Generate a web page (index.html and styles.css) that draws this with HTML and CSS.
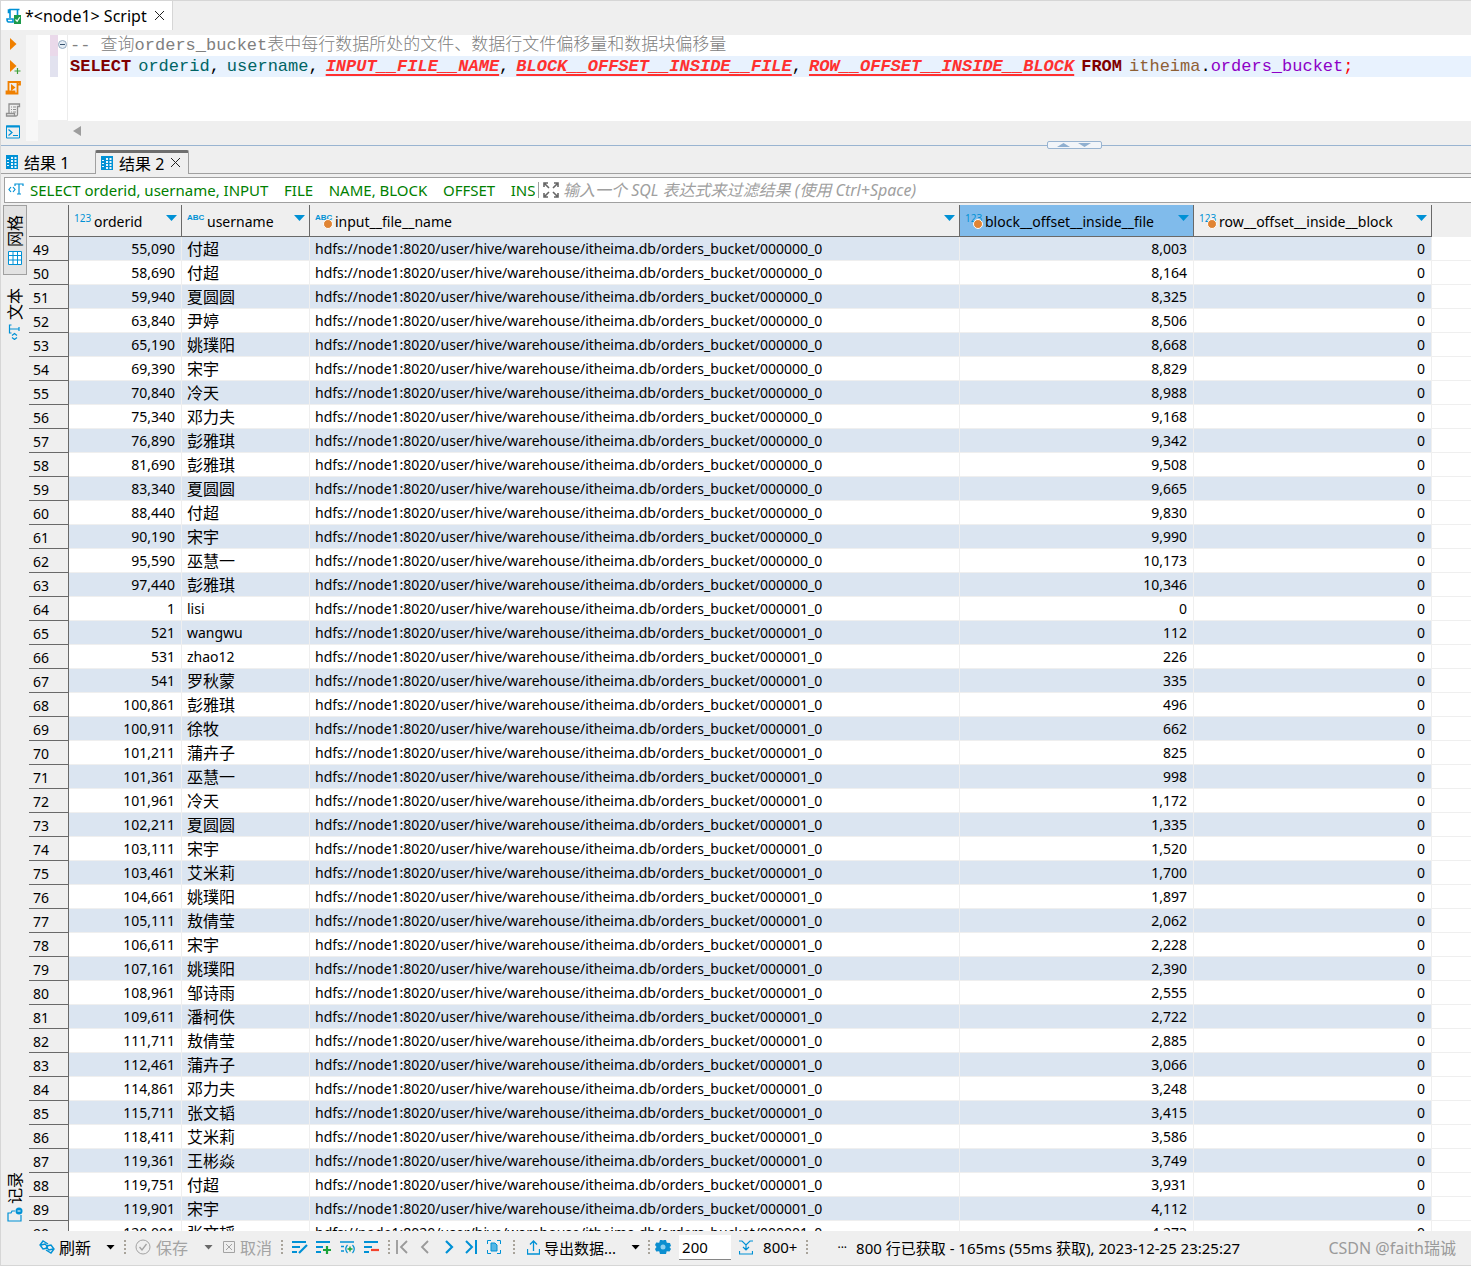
FILE: index.html
```html
<!DOCTYPE html>
<html lang="zh-CN">
<head>
  <meta charset="UTF-8" />
  <meta name="viewport" content="width=device-width, initial-scale=1" />
  <title>*&lt;node1&gt; Script</title>
  <link rel="stylesheet" href="styles.css">
</head>
<body>

<header class="tab-bar">
  <div class="file-tab">
    <svg width="16" height="16" viewBox="0 0 16 16" fill="none">
      <path d="M4 10V1.5H13.5M11.500 1.500V7M4 2H2.500V4.500H4M1 11H7V14H2.500Q1 14 1 11Z" stroke="#0091d5" stroke-width="1.600"/>
      <rect x="8" y="7" width="7" height="9" fill="#1c9a4b"/>
      <path d="M9.500 11.500l1.700 1.800 2.500-4" stroke="#fff" stroke-width="1.200"/>
    </svg>
    <span>*&lt;node1&gt; Script</span>
    <button type="button" class="close" aria-label="关闭">
      <svg width="11" height="11" viewBox="0 0 11 11"><path d="M1 1l9 9M10 1l-9 9" stroke="#222"/></svg>
    </button>
  </div>
</header>

<section class="editor">
  <nav class="editor-tools">
    <button type="button" aria-label="执行"><svg width="16" height="16" viewBox="0 0 16 16"><path d="M5 2l6.500 6L5 14z" fill="#f08000"/></svg></button>
    <button type="button" aria-label="在新标签执行"><svg width="16" height="16" viewBox="0 0 16 16"><path d="M5 2l6.500 6L5 14z" fill="#f08000"/><path d="M12.500 10v6M9.500 13h6" stroke="#3fa037" stroke-width="1.200"/></svg></button>
    <button type="button" aria-label="执行脚本"><svg width="16" height="16" viewBox="0 0 16 16" fill="none"><path d="M3.500 11V2H15V4.500H12.500V13.500H1.500V11.500H9.500V13.500M12.500 2V8" stroke="#f08000" stroke-width="1.800"/><path d="M6 4l4.500 3.500L6 11z" fill="#f08000"/></svg></button>
    <button type="button" aria-label="执行计划"><svg width="16" height="16" viewBox="0 0 16 16" fill="none"><path d="M4 11V2H14.500V4.500H12.500V12.500Q12.500 14 11 14H1.500V11.500H9.500V14" stroke="#8f8f8f" stroke-width="1.300"/><path d="M6 5h1M8 5h3M6 7.500h1M8 7.500h3M6 10h1M8 10h3" stroke="#8f8f8f"/></svg></button>
    <button type="button" aria-label="控制台"><svg width="16" height="16" viewBox="0 0 16 16" fill="none"><path d="M1.500 2h13v12h-13z" stroke="#0091d5"/><path d="M1 2.500h14" stroke="#0091d5" stroke-width="2"/><path d="M3.500 5.500L7 8.500l-3.500 3M8 11.500h5" stroke="#0091d5" stroke-width="1.200"/></svg></button>
  </nav>
  <div class="ruler"></div>
  <div class="fold">
    <div class="change added"></div>
    <div class="change edited"></div>
    <svg class="fold-mark" width="9" height="9" viewBox="0 0 9 9"><circle cx="4.500" cy="4.500" r="4" fill="#e4ecf4" stroke="#93a9bf"/><path d="M2 4.500h5" stroke="#37536f"/></svg>
  </div>
  <div class="code-pane">
    <div class="code">
      <div class="line comment"><span>--&nbsp;</span><span>查询orders_bucket表中每行数据所处的文件、数据行文件偏移量和数据块偏移量</span></div>
      <div class="line current"><b class="kw">SELECT</b><span><span class="col">orderid</span>,</span><span><span class="col">username</span>,</span><span><span class="err">INPUT__FILE__NAME</span>,</span><span><span class="err">BLOCK__OFFSET__INSIDE__FILE</span>,</span><span class="err">ROW__OFFSET__INSIDE__BLOCK</span><b class="kw">FROM</b><span><span class="schema">itheima</span>.<span class="tbl">orders_bucket</span><span class="semi">;</span></span></div>
    </div>
    <div class="hscroll"><svg width="8" height="10" viewBox="0 0 8 10"><path d="M8 0v10L0 5z" fill="#9d9d9d"/></svg></div>
  </div>
</section>

<div class="sash">
  <div class="sash-grip">
    <svg width="53" height="6" viewBox="0 0 53 6"><path d="M9 5l6.500-4L22 5zM30 1h13l-6.500 4z" fill="#8fafd0"/></svg>
  </div>
</div>

<nav class="result-tabs">
  <button type="button" class="result-tab">
    <svg width="12" height="14" viewBox="0 0 12 14"><path d="M0 0h12v14H0z" fill="#0091d5"/><path d="M5 2h2v2H5zM8.500 2h2v2h-2zM5 5h2v2H5zM8.500 5h2v2h-2zM5 8h2v2H5zM8.500 8h2v2h-2zM5 11h2v2H5zM8.500 11h2v2h-2zM1 4h2v1H1zM1 7h2v1H1zM1 10h2v1H1z" fill="#eaf6fc"/></svg>
    <span>结果 1</span>
  </button>
  <button type="button" class="result-tab active">
    <svg width="12" height="14" viewBox="0 0 12 14"><path d="M0 0h12v14H0z" fill="#0091d5"/><path d="M5 2h2v2H5zM8.500 2h2v2h-2zM5 5h2v2H5zM8.500 5h2v2h-2zM5 8h2v2H5zM8.500 8h2v2h-2zM5 11h2v2H5zM8.500 11h2v2h-2zM1 4h2v1H1zM1 7h2v1H1zM1 10h2v1H1z" fill="#eaf6fc"/></svg>
    <span>结果 2</span>
    <svg width="11" height="11" viewBox="0 0 11 11"><path d="M1 1l9 9M10 1l-9 9" stroke="#222"/></svg>
  </button>
</nav>

<div class="filter">
  <svg width="16" height="16" viewBox="0 0 16 16" fill="none"><path d="M3 5L1 7.500 3 10M5 5l2 2.500L5 10M7 4V2h8v2M11 2v10M9 12h4" stroke="#0091d5" stroke-width="1.200"/></svg>
  <label class="query" for="filter-input">SELECT orderid, username, INPUT &nbsp;&nbsp; FILE &nbsp;&nbsp; NAME, BLOCK &nbsp;&nbsp; OFFSET &nbsp;&nbsp; INSIDE &nbsp;&nbsp; FILE</label>
  <button type="button" class="expand" aria-label="展开">
    <svg width="16" height="16" viewBox="0 0 16 16" fill="none"><path d="M1 5V1h4M11 1h4v4M15 11v4h-4M5 15H1v-4M1 1l5 5M15 1l-5 5M15 15l-5-5M1 15l5-5" stroke="#666" stroke-width="1.600"/></svg>
  </button>
  <input type="text" id="filter-input" placeholder="输入一个 SQL 表达式来过滤结果 (使用 Ctrl+Space)" />
</div>

<main class="results">
  <nav class="side-tabs">
    <button type="button" class="side-tab active"><span>网格</span>
      <svg width="14" height="14" viewBox="0 0 14 14"><path d="M.5.5h13v13H.5zM.5 4.500h13M.5 9h13M5 .5v13M9.500.5v13" fill="#fff" stroke="#0091d5"/></svg>
    </button>
    <button type="button" class="side-tab"><span>文本</span>
      <svg width="14" height="16" viewBox="0 0 14 16" fill="none"><path d="M3.500 1H1.500v8h2M1.500 5h10M11 3v4M4 11.500L6.500 9.500 9 11.500M4 13.500l2.500 2 2.500-2" stroke="#0091d5" stroke-width="1.200"/></svg>
    </button>
    <button type="button" class="side-tab log"><span>记录</span>
      <svg width="16" height="15" viewBox="0 0 16 15" fill="none"><path d="M8 4H5L4 6H1v8h13V8" stroke="#0091d5" stroke-width="1.200"/><circle cx="12" cy="4" r="3.500" fill="#0091d5"/><path d="M10.500 4h3" stroke="#fff"/></svg>
    </button>
  </nav>
  <div class="grid">
    <table>
      <colgroup><col class="w-num"><col class="w-id"><col class="w-user"><col class="w-file"><col class="w-block"><col class="w-row"><col></colgroup>
      <thead>
        <tr>
          <th></th>
          <th><div class="head"><i class="type">123</i><span>orderid</span><i class="arrow"></i></div></th>
          <th><div class="head"><i class="type abc">ABC</i><span>username</span><i class="arrow"></i></div></th>
          <th><div class="head"><i class="type abc dot">ABC</i><span>input__file__name</span><i class="arrow"></i></div></th>
          <th class="selected"><div class="head"><i class="type dot">123</i><span>block__offset__inside__file</span><i class="arrow"></i></div></th>
          <th><div class="head"><i class="type dot">123</i><span>row__offset__inside__block</span><i class="arrow"></i></div></th>
          <th class="rest"></th>
        </tr>
      </thead>
      <tbody id="rows"></tbody>
    </table>
  </div>
</main>

<footer class="status">
  <button type="button" class="refresh">
    <svg width="16" height="16" viewBox="0 0 16 16" fill="none"><path d="M9 5L4 2 1 6l3 4 5-1M2 6l4-1 3 3M7 11l5 3 3-4-3-4-5 1M14 10l-4 1-3-3" stroke="#0091d5" stroke-width="1.400"/></svg>
    <span>刷新</span><i class="drop"></i>
  </button>
  <i class="sep"></i>
  <button type="button" class="save" disabled>
    <svg width="16" height="16" viewBox="0 0 16 16" fill="none"><circle cx="8" cy="8" r="7" stroke="#a3a3a3"/><path d="M4.500 8l2.500 3 4.500-6" stroke="#a3a3a3" stroke-width="1.300"/></svg>
    <span>保存</span><i class="drop"></i>
  </button>
  <button type="button" class="cancel" disabled>
    <svg width="12" height="12" viewBox="0 0 12 12" fill="none"><path d="M.5.5h11v11H.5zM3 3l6 6M9 3L3 9" stroke="#a3a3a3"/></svg>
    <span>取消</span>
  </button>
  <i class="sep"></i>
  <div class="icons">
    <button type="button" aria-label="编辑"><svg width="16" height="14" viewBox="0 0 16 14" fill="none"><path d="M0 2h14M0 7h8M0 12h5" stroke="#0091d5" stroke-width="1.800"/><path d="M7 13l8-8" stroke="#0091d5" stroke-width="2.200"/></svg></button>
    <button type="button" aria-label="添加"><svg width="16" height="14" viewBox="0 0 16 14" fill="none"><path d="M0 2h14M0 7h7M0 12h5" stroke="#0091d5" stroke-width="1.800"/><path d="M11 6v8M7 10h8" stroke="#1aa33a" stroke-width="2.200"/></svg></button>
    <button type="button" aria-label="复制"><svg width="16" height="14" viewBox="0 0 16 14" fill="none"><path d="M0 2h14M1 6.500h3M1 11h3" stroke="#0091d5" stroke-width="1.600"/><path d="M7.500 5Q4 9 7.500 13M12.500 5q3.500 4 0 8" stroke="#0091d5" stroke-width="1.200"/><path d="M10 6.500v5M7.500 9h5" stroke="#1aa33a" stroke-width="1.400"/></svg></button>
    <button type="button" aria-label="删除"><svg width="16" height="14" viewBox="0 0 16 14" fill="none"><path d="M0 2h14M0 7h8M0 12h5" stroke="#0091d5" stroke-width="1.800"/><path d="M7 10h8" stroke="#f4432c" stroke-width="2.200"/></svg></button>
  </div>
  <i class="sep tight"></i>
  <div class="icons pager">
    <button type="button" aria-label="第一页"><svg width="14" height="14" viewBox="0 0 14 14" fill="none"><path d="M2 0v14M12 1L6 7l6 6" stroke="#999" stroke-width="1.800"/></svg></button>
    <button type="button" aria-label="上一页"><svg width="14" height="14" viewBox="0 0 14 14" fill="none"><path d="M10 1L4 7l6 6" stroke="#999" stroke-width="1.800"/></svg></button>
    <button type="button" aria-label="下一页"><svg width="14" height="14" viewBox="0 0 14 14" fill="none"><path d="M5 1l6 6-6 6" stroke="#0091d5" stroke-width="2.200"/></svg></button>
    <button type="button" aria-label="最后一页"><svg width="14" height="14" viewBox="0 0 14 14" fill="none"><path d="M12 0v14M2 1l6 6-6 6" stroke="#0091d5" stroke-width="2"/></svg></button>
    <button type="button" aria-label="全部"><svg width="14" height="14" viewBox="0 0 14 14" fill="none"><path d="M.5 4V.5H4M10 .5h3.500V4M13.500 10v3.500H10M4 13.500H.5V10" stroke="#0091d5"/><path d="M4 3h4l2 2v6H4z" fill="#55b6e4" stroke="#0091d5"/></svg></button>
  </div>
  <i class="sep wide"></i>
  <button type="button" class="export">
    <svg width="13" height="15" viewBox="0 0 13 15" fill="none"><path d="M.5 9v5h12V9M6.500 11V1.500M3 4.500l3.500-3.500L10 4.500" stroke="#0091d5" stroke-width="1.300"/></svg>
    <span>导出数据...</span><i class="drop"></i>
  </button>
  <i class="sep tight"></i>
  <button type="button" class="gear" aria-label="设置">
    <svg width="16" height="16" viewBox="0 0 16 16"><path d="M5 1h2.500L8 2l.5-1H11l.8 2.800L15 4l1 3-1.500 1L16 10l-1.500 2.500-2.800-.2L11 15H5l-.8-2.700-3 .2L0 10l1.500-2L0 6l1.200-2.500 3 .3z" fill="#0c8fd0"/><circle cx="8" cy="8" r="2.500" fill="#8ed0f0"/></svg>
  </button>
  <input type="text" class="limit" value="200" aria-label="行数" />
  <button type="button" class="count">
    <svg width="14" height="15" viewBox="0 0 14 15" fill="none"><path d="M.5 11v3h13v-3M0 1h3l4 4 4-4h3M7 5v4M4 7l3 3 3-3" stroke="#0091d5" stroke-width="1.200"/></svg>
    <span>800+</span>
  </button>
  <i class="sep"></i>
  <span class="more">···</span>
  <span class="message">800 行已获取 - 165ms (55ms 获取), 2023-12-25 23:25:27</span>
  <span class="watermark">CSDN @faith瑞诚</span>
</footer>

<script src="rows.js"></script>
</body>
</html>
```
FILE: styles.css
```css
* {
  box-sizing: border-box;
}
body {
  margin: 0;
  height: 100vh;
  display: flex;
  flex-direction: column;
  overflow: hidden;
  background-color: #efefef;
  border: 1px solid #d6d6d6;
  border-right: none;
  font-family: "Noto Sans", "Noto Sans CJK SC", sans-serif;
  font-size: 16px;
  color: #000;
}
button {
  display: flex;
  align-items: center;
  margin: 0;
  padding: 0;
  border: none;
  background: none;
  font: inherit;
  color: inherit;
}
svg {
  display: block;
  flex: none;
}
i {
  font-style: normal;
}

/* editor */
.tab-bar {
  height: 29px;
  flex: none;
  display: flex;
}
.file-tab {
  display: flex;
  align-items: center;
  gap: 3px;
  padding: 0 7px 0 5px;
  background-color: #fff;
  border-right: 1px solid #d6d6d6;
  white-space: nowrap;
}
.file-tab .close {
  margin-left: 4px;
}
.editor {
  display: flex;
  flex: none;
  height: 111px;
  padding-top: 5px;
}
.editor-tools {
  width: 25px;
  padding: 1px 4px;
  display: flex;
  flex-direction: column;
  gap: 6px;
}
.ruler {
  width: 12px;
  background-color: #f7f7f7;
}
.fold {
  position: relative;
  width: 30px;
  height: 85px;
  padding-left: 12px;
  background-color: #fff;
  border-right: 1px solid #ececec;
}
.change {
  width: 8px;
  height: 21px;
}
.change.added {
  background-color: #ead9ea;
}
.change.edited {
  background-color: #e2e2ef;
}
.fold-mark {
  position: absolute;
  top: 5px;
  right: 0;
}
.code-pane {
  flex: 1;
  min-width: 0;
}
.code {
  height: 86px;
  padding-left: 2px;
  overflow: hidden;
  background-color: #fff;
  font-family: "Liberation Mono", "Noto Sans CJK SC", monospace;
  font-size: 17px;
  white-space: nowrap;
}
.line {
  display: flex;
  height: 21px;
  line-height: 22px;
}
.line.comment {
  color: #808080;
  font-weight: 300;
}
.line.current {
  gap: 7px;
  background-color: #e8f2fe;
}
.kw {
  color: #800000;
}
.col {
  color: #006464;
}
.err {
  color: #ff3030;
  font-weight: bold;
  font-style: italic;
  text-decoration: underline 2px;
  text-underline-offset: 3px;
  text-decoration-skip-ink: none;
}
.schema {
  color: #8e6035;
}
.tbl {
  color: #8e00c6;
}
.semi {
  color: #ff0000;
}
.hscroll {
  padding: 5px;
}

/* sash */
.sash {
  height: 9px;
  flex: none;
  display: flex;
  justify-content: center;
  background: linear-gradient(#99b4d1, #99b4d1) 0 4px / 100% 1px no-repeat;
}
.sash-grip {
  position: relative;
  left: 23%;
  width: 55px;
  height: 8px;
  border: 1px solid #99b4d1;
  border-radius: 2px;
  background-color: #f2f5f9;
}

/* result tabs */
.result-tabs {
  height: 24px;
  flex: none;
  display: flex;
  border-bottom: 1px solid #a0a0a0;
}
.result-tab {
  gap: 6px;
  padding: 0 6px 0 5px;
  width: 94px;
  white-space: nowrap;
}
.result-tab.active {
  height: 24px;
  padding: 0 5px 2px;
  background-color: #efefef;
  border: 1px solid #a0a0a0;
  border-top: 3px solid #6e6e6e;
  border-bottom: none;
  border-radius: 2px 2px 0 0;
}

/* filter */
.filter {
  height: 26px;
  flex: none;
  display: flex;
  align-items: center;
  margin: 3px 0 2px 3px;
  padding-left: 3px;
  background-color: #fff;
  border: 1px solid #a0a0a0;
  border-right: none;
  font-size: 15px;
}
.query {
  width: 505px;
  margin-left: 6px;
  overflow: hidden;
  white-space: nowrap;
  color: #008000;
}
.expand {
  margin-left: 3px;
  padding-left: 4px;
  border-left: 1px solid #a0a0a0;
}
.filter input {
  flex: 1;
  margin-left: 4px;
  padding: 0;
  border: none;
  outline: none;
  background: none;
  font: inherit;
  font-size: 16px;
  font-style: italic;
}
.filter input::placeholder {
  color: #a0a0a0;
}

/* grid */
.results {
  flex: 1;
  min-height: 0;
  display: flex;
}
.side-tabs {
  width: 28px;
  flex: none;
  display: flex;
  flex-direction: column;
  gap: 4px;
  padding: 0 2px 8px;
}
.side-tab {
  width: 24px;
  height: 70px;
  flex-direction: column;
  justify-content: center;
  gap: 3px;
  border: 1px solid transparent;
}
.side-tab span {
  writing-mode: vertical-rl;
  text-orientation: sideways;
  transform: rotate(180deg);
  line-height: 20px;
}
.side-tab.active {
  border-color: #a0a0a0;
  background-color: #e2e2e2;
}
.side-tab.log {
  margin-top: auto;
  height: 52px;
}
.grid {
  flex: 1;
  min-width: 0;
  overflow: hidden;
  background-color: #fff;
}
table {
  width: 100%;
  table-layout: fixed;
  border-collapse: separate;
  border-spacing: 0;
  font-size: 14px;
}
.w-num { width: 40px; }
.w-id { width: 113px; }
.w-user { width: 128px; }
.w-file { width: 650px; }
.w-block { width: 234px; }
.w-row { width: 238px; }
th {
  height: 32px;
  padding: 0;
  background-color: #efefef;
  border-right: 1px solid #696969;
  border-bottom: 1px solid #696969;
  font-weight: normal;
  text-align: left;
}
th.selected {
  background-color: #80bbeb;
}
th.rest {
  border: none;
}
.head {
  display: flex;
  align-items: center;
  height: 31px;
  padding: 0 4px 0 5px;
}
.head span {
  margin-left: 2px;
  line-height: 20px;
  padding-top: 2px;
}
.type {
  position: relative;
  align-self: flex-start;
  width: 18px;
  padding-top: 5px;
  color: #0091d5;
  font-size: 10px;
  line-height: 16px;
}
.type.abc {
  font-family: "Liberation Sans", sans-serif;
  font-size: 8px;
  font-weight: bold;
}
.type.dot::after {
  content: "";
  position: absolute;
  left: 8px;
  top: 14px;
  width: 8px;
  height: 8px;
  border: 1px solid #fff;
  border-radius: 50%;
  background-color: #e08434;
}
.arrow {
  width: 11px;
  height: 6px;
  margin: -5px 0 0 auto;
  background-color: #0091d5;
  clip-path: polygon(0 0, 100% 0, 50% 100%);
}
td {
  height: 24px;
  padding: 0 5px;
  border-right: 1px solid #efefef;
  border-bottom: 1px solid #efefef;
  line-height: 20px;
  white-space: nowrap;
}
tbody tr:nth-child(odd) td {
  background-color: #dbe5f1;
}
tbody tr td:last-child,
tbody tr:nth-child(odd) td:last-child {
  background-color: #fff;
  border-right: none;
}
tbody th {
  height: 24px;
  padding: 2px 4px 0;
  line-height: 20px;
}
td.number {
  text-align: right;
  padding-right: 6px;
}
td.cjk {
  font-size: 16px;
}

/* status bar */
.status {
  height: 34px;
  flex: none;
  display: flex;
  align-items: center;
  padding: 0 15px 2px 38px;
  white-space: nowrap;
}
.status button {
  flex: none;
  gap: 4px;
}
.status button:disabled {
  color: #a3a3a3;
}
.drop {
  width: 9px;
  height: 5px;
  margin-left: 11px;
  background-color: currentColor;
  clip-path: polygon(0 0, 100% 0, 50% 100%);
}
button:disabled .drop {
  background-color: #696969;
}
.sep {
  flex: none;
  width: 2px;
  height: 14px;
  margin: 0 9px;
  background: repeating-linear-gradient(#a8a39a 0 2px, transparent 2px 4px);
}
.sep.tight {
  margin: 0 5px 0 8px;
}
.sep.wide {
  margin: 0 12px;
}
.cancel {
  margin-left: 10px;
}
.status .cancel,
.status .save {
  gap: 5px;
}
.icons {
  display: flex;
  gap: 8px;
}
.icons.pager {
  gap: 9px;
}
.export {
  font-size: 15px;
}
.limit {
  width: 52px;
  height: 25px;
  margin: 0 8px;
  padding: 0 3px;
  border: none;
  border-bottom: 1px solid #868686;
  background-color: #fff;
  font: inherit;
  font-size: 15px;
}
.status .count {
  gap: 10px;
  font-size: 15px;
}
.more {
  margin: 0 9px 0 20px;
  font-size: 12px;
}
.message {
  font-size: 15px;
}
.watermark {
  margin-left: auto;
  color: #9a9a9a;
}
```
FILE: rows.js
```js
// 行号从 49 开始: orderid, username, block offset
const firstRow = 49;
const bucket0 = [
  ['55,090', '付超', '8,003'],
  ['58,690', '付超', '8,164'],
  ['59,940', '夏圆圆', '8,325'],
  ['63,840', '尹婷', '8,506'],
  ['65,190', '姚璞阳', '8,668'],
  ['69,390', '宋宇', '8,829'],
  ['70,840', '冷天', '8,988'],
  ['75,340', '邓力夫', '9,168'],
  ['76,890', '彭雅琪', '9,342'],
  ['81,690', '彭雅琪', '9,508'],
  ['83,340', '夏圆圆', '9,665'],
  ['88,440', '付超', '9,830'],
  ['90,190', '宋宇', '9,990'],
  ['95,590', '巫慧一', '10,173'],
  ['97,440', '彭雅琪', '10,346']
];
const bucket1 = [
  ['1', 'lisi', '0'],
  ['521', 'wangwu', '112'],
  ['531', 'zhao12', '226'],
  ['541', '罗秋蒙', '335'],
  ['100,861', '彭雅琪', '496'],
  ['100,911', '徐牧', '662'],
  ['101,211', '蒲卉子', '825'],
  ['101,361', '巫慧一', '998'],
  ['101,961', '冷天', '1,172'],
  ['102,211', '夏圆圆', '1,335'],
  ['103,111', '宋宇', '1,520'],
  ['103,461', '艾米莉', '1,700'],
  ['104,661', '姚璞阳', '1,897'],
  ['105,111', '敖倩莹', '2,062'],
  ['106,611', '宋宇', '2,228'],
  ['107,161', '姚璞阳', '2,390'],
  ['108,961', '邹诗雨', '2,555'],
  ['109,611', '潘柯佚', '2,722'],
  ['111,711', '敖倩莹', '2,885'],
  ['112,461', '蒲卉子', '3,066'],
  ['114,861', '邓力夫', '3,248'],
  ['115,711', '张文韬', '3,415'],
  ['118,411', '艾米莉', '3,586'],
  ['119,361', '王彬焱', '3,749'],
  ['119,751', '付超', '3,931'],
  ['119,901', '宋宇', '4,112'],
  ['120,001', '张文韬', '4,273']
];

const path = 'hdfs://node1:8020/user/hive/warehouse/itheima.db/orders_bucket/';
const rows = [
  ...bucket0.map(r => [...r, '000000_0']),
  ...bucket1.map(r => [...r, '000001_0'])
];

document.getElementById('rows').innerHTML = rows.map(([id, user, offset, file], i) => `
  <tr>
    <th>${firstRow + i}</th>
    <td class="number">${id}</td>
    <td class="${/[a-z]/.test(user) ? '' : 'cjk'}">${user}</td>
    <td>${path}${file}</td>
    <td class="number">${offset}</td>
    <td class="number">0</td>
    <td></td>
  </tr>`).join('');
```
